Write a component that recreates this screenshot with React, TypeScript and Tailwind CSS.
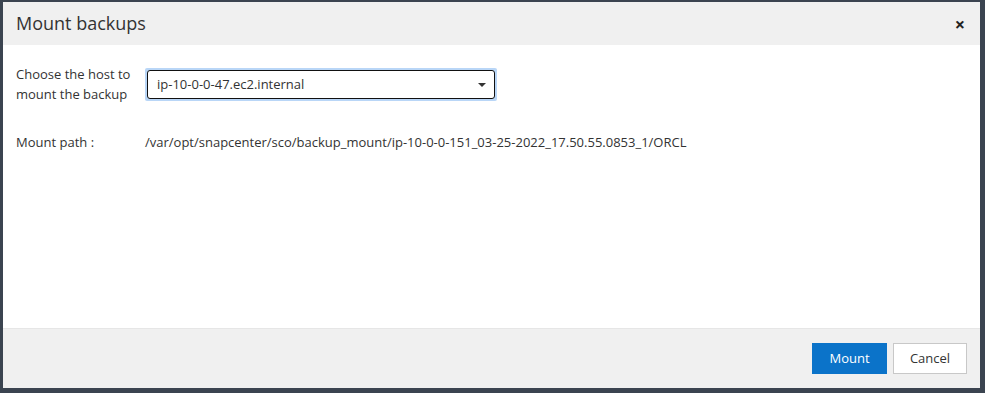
import React from 'react';

export default function App() {
  return (
    <div className="w-[985px] h-[393px] bg-[#3b4450] pl-[3px] pt-[2px] pr-[5px] pb-[5px] font-['Open_Sans',sans-serif] text-[#333]">
      <div className="flex flex-col h-full bg-white">
        <div className="flex items-center justify-between h-[43px] bg-[#f0f0f0] pl-[13px] pr-[15px]">
          <h1 className="text-[18px] leading-none text-[#333] pb-[1px]">Mount backups</h1>
          <button className="text-[#222] font-bold text-[18px] leading-none">×</button>
        </div>

        <div className="flex-1 pt-[19px] text-[13px]">
          <div className="flex">
            <div className="w-[142px] pl-[13px] leading-[20px]">
              Choose the host to<br />mount the backup
            </div>
            <div className="rounded-[2px] bg-[#b9d6f7] p-[2px] w-[352px] h-[33px] mt-[4px]">
              <div className="flex items-center justify-between h-full bg-white border-[1.5px] border-[#111] rounded-[3px] pl-[9px] pr-[8px]">
                <span>ip-10-0-0-47.ec2.internal</span>
                <span className="w-0 h-0 border-l-[4px] border-r-[4px] border-t-[4px] border-l-transparent border-r-transparent border-t-[#333]" />
              </div>
            </div>
          </div>

          <div className="flex mt-[29px]">
            <div className="w-[142px] pl-[13px]">Mount path :</div>
            <div>/var/opt/snapcenter/sco/backup_mount/ip-10-0-0-151_03-25-2022_17.50.55.0853_1/ORCL</div>
          </div>
        </div>

        <div className="flex justify-end items-center gap-[6px] h-[60px] bg-[#f0f0f0] border-t border-[#e6e6e6] pr-[13px] text-[13px]">
          <button className="w-[75px] h-[31px] bg-[#0b73c9] text-white">Mount</button>
          <button className="w-[74px] h-[31px] bg-white border border-[#c8c8c8] text-[#333]">Cancel</button>
        </div>
      </div>
    </div>
  );
}
